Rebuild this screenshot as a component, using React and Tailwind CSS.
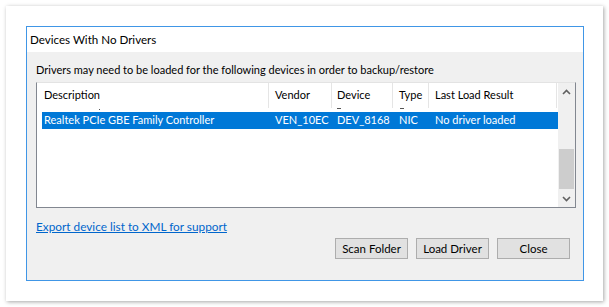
import React from 'react';

const columns = [
  { key: 'desc', label: 'Description', width: 'w-[227px]', pad: 'pl-[2px]' },
  { key: 'vendor', label: 'Vendor', width: 'w-[63px]', pad: 'pl-[6px]' },
  { key: 'device', label: 'Device', width: 'w-[61px]', pad: 'pl-[5px]' },
  { key: 'type', label: 'Type', width: 'w-[36px]', pad: 'pl-[6px]' },
  { key: 'result', label: 'Last Load Result', width: 'w-[128px]', pad: 'pl-[6px]' },
];

const rows = [
  {
    desc: 'Realtek PCIe GBE Family Controller',
    vendor: 'VEN_10EC',
    device: 'DEV_8168',
    type: 'NIC',
    result: 'No driver loaded',
  },
];

const Chevron = ({ up }) => (
  <svg width="9" height="6" viewBox="0 0 9 6" className="block">
    <path
      d={up ? 'M1 5 L4.5 1.5 L8 5' : 'M1 1 L4.5 4.5 L8 1'}
      fill="none"
      stroke="#606060"
      strokeWidth="1.6"
    />
  </svg>
);

const Button = ({ children }) => (
  <button className="w-[73px] h-[21px] bg-[#e1e1e1] border border-[#adadad] flex items-center justify-center leading-none">
    {children}
  </button>
);

const App = () => {
  return (
    <div className="min-h-screen bg-white pt-[6px] pl-[6px] font-['Lato',sans-serif] text-[11.5px] text-black">
      <div className="w-[597px] h-[295px] bg-white shadow-[1px_1px_4px_rgba(0,0,0,0.35)] pt-[20px] pl-[20px]">
        <div className="w-[558px] h-[255px] border border-[#4096e6] flex flex-col">
          <div className="h-[25px] bg-white flex items-center pl-[3px] text-[11.6px]">Devices With No Drivers</div>

          <div className="flex-1 bg-[#f0f0f0] pl-[9px] flex flex-col">
            <div className="pt-[10px] leading-[15px] text-[11px]">
              Drivers may need to be loaded for the following devices in order to backup/restore
            </div>

            {/* device list */}
            <div className="mt-[5px] w-[540px] h-[126px] bg-white border border-[#828790] border-t-[#e3e3e3] flex text-[11px]">
              <div className="flex-1 pl-[5px]">
                <div className="h-[25px] flex">
                  {columns.map((c) => (
                    <div
                      key={c.key}
                      className={`${c.width} ${c.pad} border-r border-[#e5e5e5] flex items-center`}
                    >
                      {c.label}
                    </div>
                  ))}
                </div>
                <div className="h-[4px] flex">
                  <span className="ml-[57px] w-[1px] h-[1px] mt-[1px] bg-[#555]" />
                  <span className="ml-[237px] w-[4px] h-[1px] bg-[#555]" />
                  <span className="ml-[59px] w-[4px] h-[1px] bg-[#555]" />
                </div>
                {rows.map((r) => (
                  <div key={r.desc} className="h-[17px] flex bg-[#0078d7] text-white">
                    {columns.map((c) => (
                      <div key={c.key} className={`${c.width} ${c.pad} flex items-center whitespace-nowrap`}>
                        {r[c.key]}
                      </div>
                    ))}
                  </div>
                ))}
              </div>

              {/* scrollbar */}
              <div className="w-[17px] bg-[#f0f0f0] flex flex-col">
                <div className="h-[17px] flex items-center justify-center">
                  <Chevron up />
                </div>
                <div className="flex-1 flex flex-col">
                  <div className="h-[49px]" />
                  <div className="h-[40px] mx-[1px] bg-[#cdcdcd]" />
                </div>
                <div className="h-[17px] flex items-center justify-center">
                  <Chevron />
                </div>
              </div>
            </div>

            <a href="#" className="mt-[11px] leading-[15px] text-[#0066cc] underline self-start text-[11.8px]">
              Export device list to XML for support
            </a>

            <div className="mt-[4px] pr-[13px] flex justify-end gap-[8px]">
              <Button>Scan Folder</Button>
              <Button>Load Driver</Button>
              <Button>Close</Button>
            </div>
          </div>
        </div>
      </div>
    </div>
  );
};

export default App;
